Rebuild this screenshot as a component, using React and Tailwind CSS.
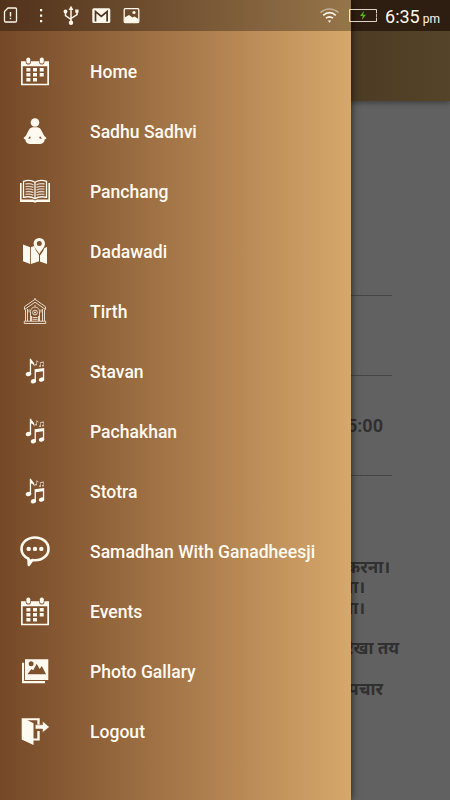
import React from "react";

function CalendarIcon() {
  return (
    <svg viewBox="0 0 30 30" className="size-[30px]" fill="currentColor">
      <path fillRule="evenodd" d="M1 4.300h28v24H1zM2.700 9.300v17.400h24.600v-17.400z" />
      <rect x="5.700" y="0" width="5.200" height="7.600" rx="2.600" fill="#825631" />
      <rect x="19.200" y="0" width="5.200" height="7.600" rx="2.600" fill="#8a5c36" />
      <rect x="6.400" y="0.400" width="3.800" height="6.200" rx="1.900" />
      <rect x="19.900" y="0.400" width="3.800" height="6.200" rx="1.900" />
      <path d="M6.400 11h4v3.600h-4zM13 11h4v3.600h-4zM19.700 11h4v3.600h-4zM6.400 16h4v3.500h-4zM13 16h4v3.500h-4zM19.700 16h4v3.500h-4zM6.400 21h4v3.500h-4zM13 21h4v3.500h-4z" />
    </svg>
  );
}

function SadhuIcon() {
  return (
    <svg viewBox="0 0 30 30" className="size-[30px]" fill="currentColor">
      <circle cx="15" cy="5.500" r="4.300" />
      <path
        fillRule="evenodd"
        d="M12.500 10.300h5c2 .4 3.100 1.400 3.900 3.300l2.900 5.300c.5.600 1.900 1.100 2 2 .1 1-1.100 1.300-1.700 1.500.1 3-2.700 4.600-5.400 4.600h-8.400c-2.700 0-5.500-1.600-5.400-4.600-.6-.2-1.800-.5-1.700-1.500.1-.9 1.500-1.400 2-2l2.900-5.300c.8-1.900 1.900-2.900 3.900-3.300zM9.900 19.300l-1.900 2.300c1.100.2 2.200.1 2.900-.6zM20.100 19.300l1.900 2.300c-1.100.2-2.200.1-2.900-.6z"
      />
    </svg>
  );
}

function BookIcon() {
  return (
    <svg viewBox="0 0 30 30" className="size-[30px]" fill="none" stroke="currentColor">
      <path d="M0 6h1.600v16.500h11.400l2 .9 2-.9h11.400V6H30v19H17l-2 .8-2-.8H0z" fill="currentColor" stroke="none" />
      <path d="M3.500 20.300V4.300c4-1.300 8.500-1 11.500 1 3-2 7.500-2.300 11.500-1v16c-4.500-1-8.500-.7-11.500 1.400-3-2.100-7-2.400-11.500-1.400zM15 5.300v16" strokeWidth="1.300" />
      <path d="M5.500 7c3-.6 5.500-.3 8 .8M5.500 9.600c3-.6 5.500-.3 8 .8M5.500 12.200c3-.6 5.500-.3 8 .8M5.500 14.800c3-.6 5.500-.3 8 .8M5.500 17.400c3-.6 5.500-.3 8 .8M24.500 7c-3-.6-5.500-.3-8 .8M24.500 9.600c-3-.6-5.500-.3-8 .8M24.500 12.200c-3-.6-5.500-.3-8 .8M24.500 14.800c-3-.6-5.500-.3-8 .8M24.500 17.400c-3-.6-5.500-.3-8 .8" strokeWidth="1.300" strokeOpacity="0.750" />
    </svg>
  );
}

function MapIcon() {
  return (
    <svg viewBox="0 0 30 30" className="size-[30px]" fill="currentColor">
      <path d="M3 7.500l7.200 2.700v16.700L3 24.200zM11 10.200l3.200-1.300c.6 2.500 2.100 5 3.500 7.200l1.300 2v6.100L11 27zM20 18.500c1.700-2.300 3.600-4.800 4.400-7.500l2.600-.9V27l-7-2.600z" />
      <path
        fillRule="evenodd"
        d="M19.300.9a5.700 5.700 0 0 1 5.700 5.700c0 3.600-3.600 7-5.700 10.300-2.100-3.300-5.700-6.700-5.700-10.300A5.700 5.700 0 0 1 19.300.9zm0 3.100a2.500 2.500 0 1 0 0 5 2.500 2.500 0 0 0 0-5z"
      />
    </svg>
  );
}

function TempleIcon() {
  return (
    <svg viewBox="0 0 30 30" className="size-[30px] opacity-80" fill="none" stroke="currentColor" strokeWidth="1">
      <path d="M4.500 12.500v-2.800L15 2.300l10.500 7.400v2.800L15 5.200zM5.500 12.500V24M7.500 12V24M22.500 12V24M24.500 12.500V24M4.300 24.200h21.400v2.300H4.300zM10.500 24V14.500a4.500 4.500 0 0 1 9 0V24" />
      <circle cx="15" cy="15.500" r="2.400" />
      <path d="M12.500 20.500h5M12.500 22.300h5M15 8v1.500M11.500 19v5M18.500 19v5M9 12.500v3M21 12.500v3M15 14.500v2M14 15.500h2" />
      <path d="M15 2.500V1.300" strokeWidth="1.500" />
    </svg>
  );
}

function MusicIcon() {
  return (
    <svg viewBox="0 0 30 30" className="size-[30px]" fill="currentColor">
      <ellipse cx="8.500" cy="17" rx="2.800" ry="2.200" transform="rotate(-20 8.500 17)" />
      <path d="M9.800 1.800h1.300c.2 2.300 4.300 3.500 3.300 8-.5-2-1.700-3-3.300-3.300V17H9.800z" />
      <ellipse cx="13.400" cy="24.300" rx="2.700" ry="2.100" transform="rotate(-20 13.400 24.300)" />
      <ellipse cx="21.500" cy="22.600" rx="2.700" ry="2.100" transform="rotate(-20 21.500 22.600)" />
      <path d="M14.600 12.200l9.600-1.300v11.800h-1.300V14.300l-7 .9v9.200h-1.300z" />
      <path d="M16.400 3l2.200 1.900-.4.600-1.200-.8v2.700a1 .8 0 1 1-.6-.5zM20.300 4.900l3.600-.5v4a1 .8 0 1 1-.6-.5V5.800l-2.300.3v2.800a1 .8 0 1 1-.7-.5z" opacity="0.700" />
    </svg>
  );
}

function ChatIcon() {
  return (
    <svg viewBox="0 0 30 30" className="size-[30px] overflow-visible" fill="currentColor">
      <path
        d="M15 .5c7.600 0 13.500 4.900 13.500 11.400S22.600 23.300 15 23.300c-.9 0-1.800-.1-2.600-.2L8.800 28l-.3-6.300C4.200 19.700 1.500 16.200 1.500 11.900 1.500 5.400 7.400.5 15 .5z"
        fill="none"
        stroke="currentColor"
        strokeWidth="2.600"
        strokeLinejoin="round"
      />
      <path d="M7.700 22l1.200 6.500 4.500-5.700z" />
      <circle cx="8.700" cy="11.900" r="2.200" />
      <circle cx="15" cy="11.900" r="2.200" />
      <circle cx="21.300" cy="11.900" r="2.200" />
    </svg>
  );
}

function PhotoIcon() {
  return (
    <svg viewBox="0 0 30 30" className="size-[30px]" fill="currentColor">
      <path d="M2 5.800h2.100v18.200h20.900v2.300H2z" />
      <path
        fillRule="evenodd"
        d="M5 2.300h23.300v20.700H5zM7.400 17.300h18.700l-4.300-8.300-2.200 3-2.900-5.200-3.500 6.400-1.700-1.200zM11.200 4.300a2.500 2.500 0 1 0 0 5 2.500 2.500 0 0 0 0-5z"
      />
    </svg>
  );
}

function LogoutIcon() {
  return (
    <svg viewBox="0 0 30 30" className="size-[30px]" fill="currentColor">
      <path d="M1.700 1.200h18v7.200h-2.400V3.300H7.500l6 3v15.300h3.800V14h2.400v9.600h-6.200v4.400L1.700 22.500z" />
      <path d="M15.300 7.800h7.300V4.300l6.800 5.600-6.800 5.600V12h-7.300z" stroke="#87592f" strokeWidth="0.500" />
    </svg>
  );
}

const menu = [
  { name: "Home", icon: CalendarIcon },
  { name: "Sadhu Sadhvi", icon: SadhuIcon },
  { name: "Panchang", icon: BookIcon },
  { name: "Dadawadi", icon: MapIcon },
  { name: "Tirth", icon: TempleIcon },
  { name: "Stavan", icon: MusicIcon },
  { name: "Pachakhan", icon: MusicIcon },
  { name: "Stotra", icon: MusicIcon },
  { name: "Samadhan With Ganadheesji", icon: ChatIcon },
  { name: "Events", icon: CalendarIcon },
  { name: "Photo Gallary", icon: PhotoIcon },
  { name: "Logout", icon: LogoutIcon },
];

function StatusBar() {
  return (
    <div className="absolute inset-x-0 top-0 z-20 flex h-[31px] items-center bg-black/30 text-[#fff6ea]">
      <svg width="150" height="31" viewBox="0 0 150 31" fill="none" stroke="currentColor">
        {/* SIM */}
        <path d="M8 8h7.500q1 0 1 1v12q0 1-1 1h-10q-1 0-1-1V11.500z" strokeWidth="1.300" />
        <path d="M10.500 12v4.500M10.500 17.800v1.400" strokeWidth="1.400" />
        {/* More */}
        <path d="M40 9h2.200v2.200H40zM40 14.500h2.200v2.200H40zM40 20h2.200v2.200H40z" fill="currentColor" stroke="none" />
        {/* USB */}
        <path d="M71 8v15M65.500 12v3.500l5.500 4M77 12v2.500L71 18.500" strokeWidth="1.500" />
        <path d="M71 5.700l2.500 4.300h-5zM75.300 9.500h3.200v3.200h-3.200z" fill="currentColor" stroke="none" />
        <circle cx="65.500" cy="11.500" r="1.900" fill="currentColor" stroke="none" />
        <circle cx="71" cy="22.700" r="2.200" fill="currentColor" stroke="none" />
        {/* Mail */}
        <rect x="92.300" y="8.300" width="18" height="14.700" rx="1.500" fill="currentColor" stroke="none" />
        <path d="M95.500 21.500V11.500l5.800 5 5.800-5v10" stroke="#4d3420" strokeWidth="1.700" />
        {/* Image */}
        <rect x="124.200" y="8.700" width="14.600" height="13.800" rx="1" strokeWidth="1.300" />
        <path d="M124.500 17.500l4.500-2.500 3.500 2.500 2-1 4 2.500v3.500h-14z" fill="currentColor" stroke="none" />
        <circle cx="134" cy="12.500" r="1.600" fill="currentColor" stroke="none" />
      </svg>
      <div className="ml-auto flex items-center pr-[10px]">
        <svg width="60" height="31" viewBox="0 0 60 31" fill="none" stroke="currentColor" className="mr-[6px]">
          {/* Wi-Fi */}
          <path d="M1.500 12.500c5.500-4.700 12.500-4.700 18 0" strokeWidth="1.600" opacity="0.450" />
          <path d="M4.200 15.300c4-3.300 8.600-3.300 12.600 0M7 18.200c2.200-1.700 4.800-1.700 7 0" strokeWidth="1.700" />
          <path d="M8.800 20.500h3.400l-1.700 2.200z" fill="currentColor" stroke="none" />
          {/* Battery */}
          <path d="M57.500 13V9.500h-27v12h27V18" strokeWidth="1" opacity="0.850" />
          <path d="M57.500 13.500v4" strokeWidth="1" opacity="0.700" />
          <path d="M45 10.800l-4 5.200h2.700l-.9 4 4.200-5.300h-2.800z" fill="#54b31d" stroke="none" />
        </svg>
        <span className="pt-[2px] text-[18px] leading-none">6:35</span>
        <span className="ml-[3px] pt-[6px] text-[12px] leading-none">pm</span>
      </div>
    </div>
  );
}

// Tela por trás do drawer, já escurecida
function Page() {
  return (
    <div className="flex h-full flex-col bg-[#616161] font-['Roboto','Noto_Sans_Devanagari','Noto_Sans',sans-serif] font-bold text-[#303030]">
      <header className="h-[101px] shrink-0 bg-linear-to-r from-[#2f1d11] to-[#554429] shadow-[0_2px_5px_rgba(0,0,0,0.35)]">
        <div className="h-[31px] bg-[#432a19]" />
      </header>
      <div className="mr-[58px] h-[195px] shrink-0 border-b border-[#454545]" />
      <div className="mr-[58px] h-[80px] shrink-0 border-b border-[#454545]" />
      <div className="mr-[58px] flex h-[100px] shrink-0 items-center justify-end border-b border-[#454545] pr-[9px] text-[18px]">
        05:00
      </div>
      <div className="flex flex-col pt-[81px] text-right text-[17px] leading-[20.400px]">
        <p className="pr-[60px]">करना।</p>
        <p className="pr-[85px]">ना।</p>
        <p className="pr-[85px]">ना।</p>
        <p className="pt-[20px] pr-[51px]">रेखा तय</p>
        <p className="pt-[20px] pr-[67px]">उपचार</p>
      </div>
    </div>
  );
}

function Drawer() {
  return (
    <aside className="absolute inset-y-0 left-0 z-10 w-[350.500px] bg-linear-to-r from-[#754928] to-[#d7a86b] pt-[42px] shadow-[1px_0_7px_rgba(0,0,0,0.55)]">
      <nav className="flex flex-col">
        {menu.map((item) => (
          <a key={item.name} href="#" className="flex h-[60px] items-center gap-10 pl-5 text-[#fffaf0]">
            <item.icon />
            <span className="text-[17.570px] leading-[26px] font-medium whitespace-nowrap">{item.name}</span>
          </a>
        ))}
      </nav>
    </aside>
  );
}

export default function App() {
  return (
    <div className="relative h-[800px] w-[450px] overflow-hidden font-['Roboto',sans-serif]">
      <Page />
      <Drawer />
      <StatusBar />
    </div>
  );
}
